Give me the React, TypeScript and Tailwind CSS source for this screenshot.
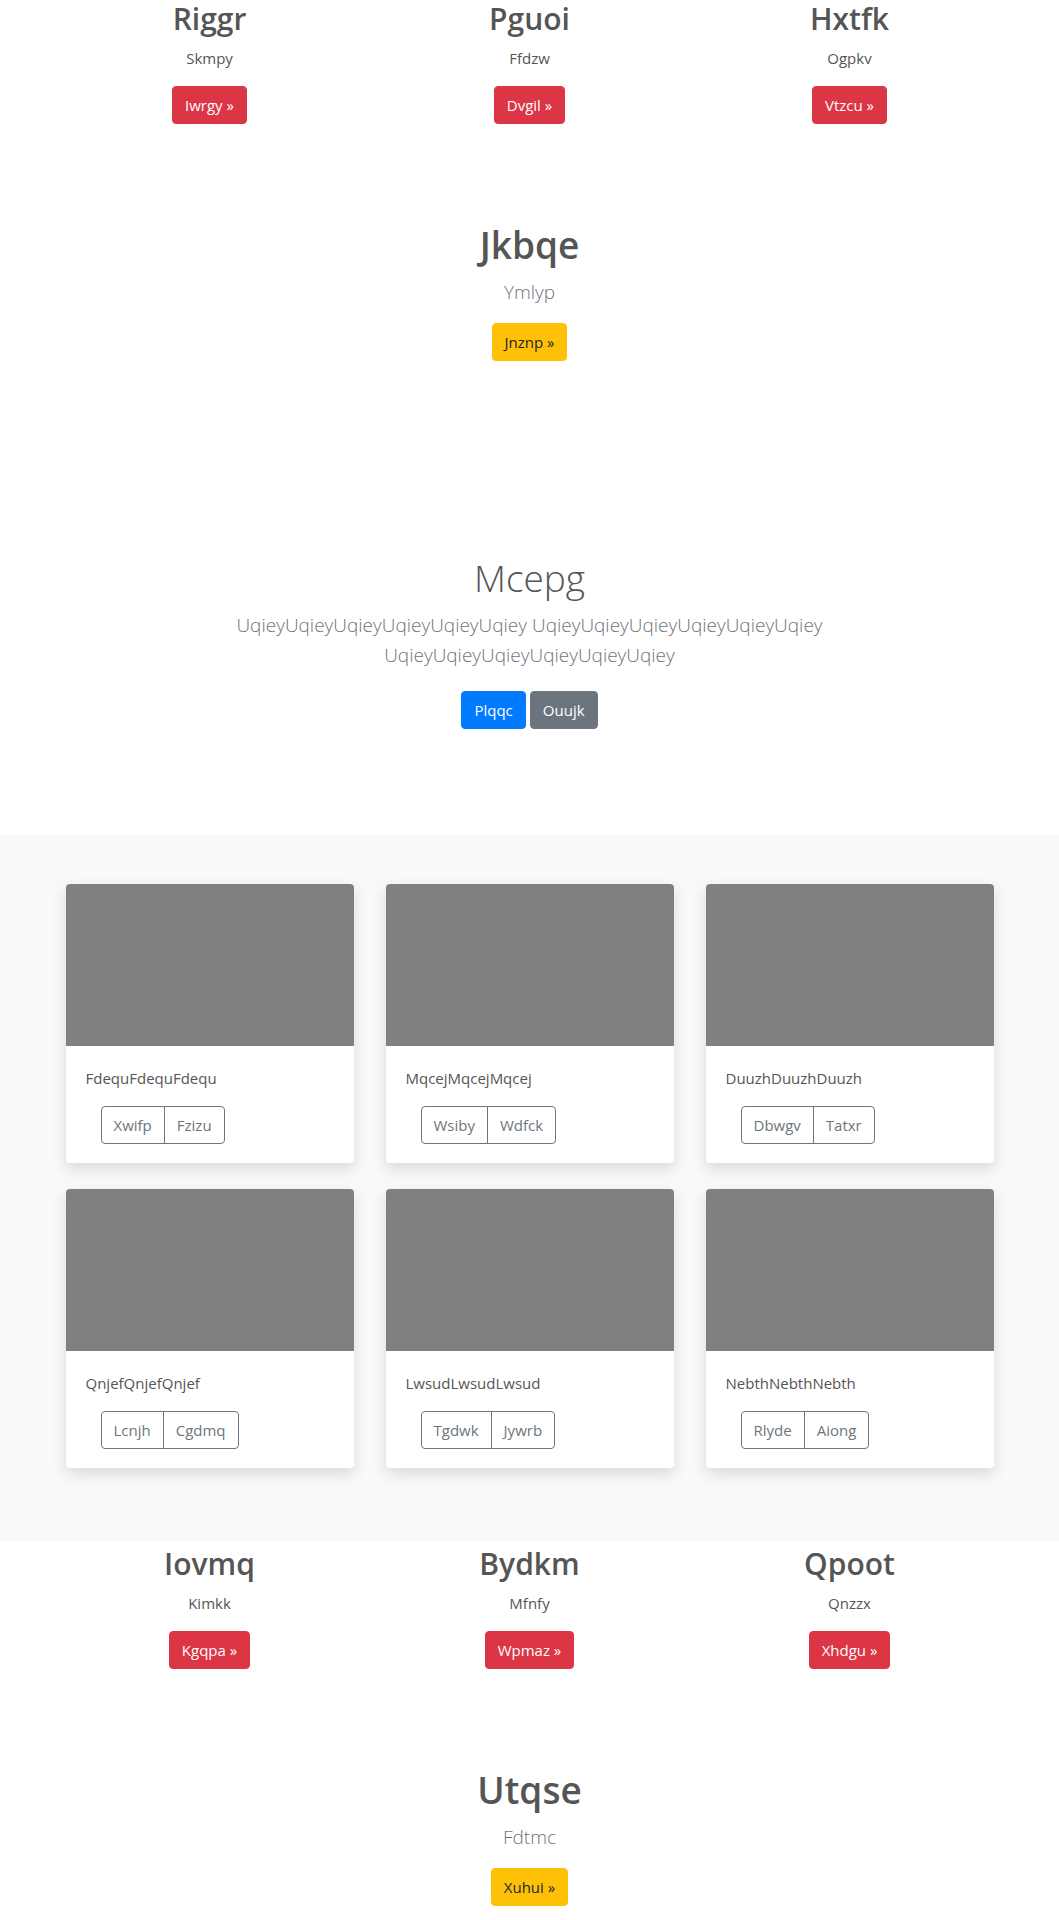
const columns = [
  { title: 'Riggr', text: 'Skmpy', cta: 'Iwrgy' },
  { title: 'Pguoi', text: 'Ffdzw', cta: 'Dvgil' },
  { title: 'Hxtfk', text: 'Ogpkv', cta: 'Vtzcu' },
]

const columns2 = [
  { title: 'Iovmq', text: 'Kimkk', cta: 'Kgqpa' },
  { title: 'Bydkm', text: 'Mfnfy', cta: 'Wpmaz' },
  { title: 'Qpoot', text: 'Qnzzx', cta: 'Xhdgu' },
]

const cards = [
  { text: 'FdequFdequFdequ', a: 'Xwifp', b: 'Fzizu' },
  { text: 'MqcejMqcejMqcej', a: 'Wsiby', b: 'Wdfck' },
  { text: 'DuuzhDuuzhDuuzh', a: 'Dbwgv', b: 'Tatxr' },
  { text: 'QnjefQnjefQnjef', a: 'Lcnjh', b: 'Cgdmq' },
  { text: 'LwsudLwsudLwsud', a: 'Tgdwk', b: 'Jywrb' },
  { text: 'NebthNebthNebth', a: 'Rlyde', b: 'Aiong' },
]

const btn = 'inline-flex items-center h-[38px] px-3 rounded-[4px] text-[15px] leading-6 border'

function ColumnRow({ items, className = '' }: { items: typeof columns; className?: string }) {
  return (
    <div className={`grid grid-cols-3 w-[960px] mx-auto ${className}`}>
      {items.map(c => (
        <div key={c.title} className="text-center">
          <h2 className="text-[30px] leading-[38px] font-semibold mb-2 text-[#555]">{c.title}</h2>
          <p className="text-[15px] leading-6 mb-4 text-[#555]">{c.text}</p>
          <a className={`${btn} bg-[#dc3545] border-[#dc3545] text-white`}>{c.cta} &raquo;</a>
        </div>
      ))}
    </div>
  )
}

function Feature({ title, text, cta }: { title: string; text: string; cta: string }) {
  return (
    <div className="text-center mt-[97px]">
      <h1 className="text-[37px] leading-[48px] font-semibold mb-2 text-[#555]">{title}</h1>
      <p className="text-[19px] leading-[30px] font-light mb-4 text-[#6c757d]">{text}</p>
      <a className={`${btn} bg-[#ffc107] border-[#ffc107] text-[#212529]`}>{cta} &raquo;</a>
    </div>
  )
}

function Card({ text, a, b }: { text: string; a: string; b: string }) {
  return (
    <div className="bg-white rounded-[4px] overflow-hidden shadow-[0_6px_16px_rgba(0,0,0,0.13)]">
      <div className="h-[162px] bg-[#808080]" />
      <div className="px-5 pt-5 pb-[19px]">
        <p className="text-[15px] leading-6 mb-4 text-[#555]">{text}</p>
        <div className="ml-[15px] inline-flex">
          <button className={`${btn} border-[#6c757d] text-[#6c757d] rounded-r-none`}>{a}</button>
          <button className={`${btn} border-[#6c757d] text-[#6c757d] rounded-l-none -ml-px`}>{b}</button>
        </div>
      </div>
    </div>
  )
}

export default function App() {
  const word = 'UqieyUqieyUqieyUqieyUqieyUqiey'
  return (
    <div className="min-h-screen bg-white font-['Open_Sans',sans-serif] text-[#555]">
      <ColumnRow items={columns} />
      <Feature title="Jkbqe" text="Ymlyp" cta="Jnznp" />

      {/* Hero */}
      <section className="text-center mt-[193px] pb-[106px]">
        <h1 className="text-[37px] leading-[48px] font-light mb-2 text-[#555]">Mcepg</h1>
        <p className="text-[19px] leading-[30px] font-light text-[#6c757d] max-w-[700px] mx-auto">
          {word} {word} {word}
        </p>
        <div className="mt-[21px] flex justify-center gap-1">
          <a className={`${btn} bg-[#007bff] border-[#007bff] text-white`}>Plqqc</a>
          <a className={`${btn} bg-[#6c757d] border-[#6c757d] text-white`}>Ouujk</a>
        </div>
      </section>

      {/* Album */}
      <section className="bg-[#f8f9fa] pt-[49px] pb-[73px]">
        <div className="grid grid-cols-3 gap-y-[26px] w-[960px] mx-auto">
          {cards.map(c => (
            <div key={c.text} className="px-4">
              <Card {...c} />
            </div>
          ))}
        </div>
      </section>

      <ColumnRow items={columns2} className="pt-1" />
      <Feature title="Utqse" text="Fdtmc" cta="Xuhui" />
      <div className="h-10" />
    </div>
  )
}
